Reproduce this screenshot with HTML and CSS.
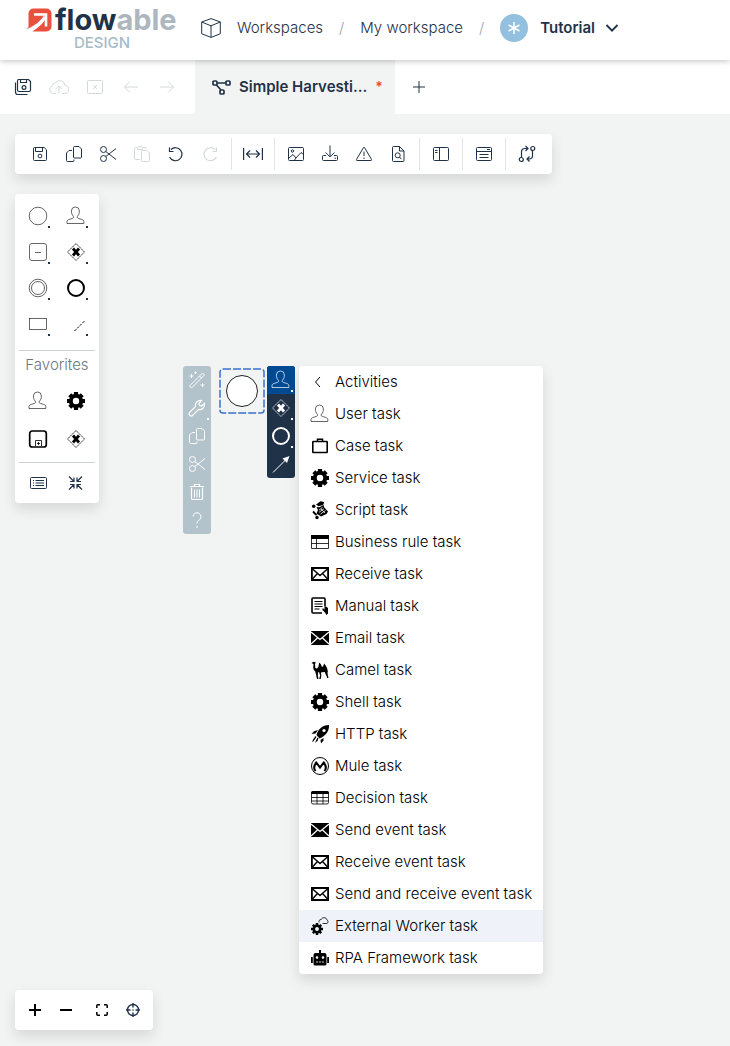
FILE: index.html
```html
<!DOCTYPE html>
<html lang="en">
<head>
<meta charset="utf-8">
<meta name="viewport" content="width=device-width, initial-scale=1">
<title>Flowable Design</title>
<link rel="stylesheet" href="styles.css">
</head>
<body>
<svg class="sprite" aria-hidden="true">
  <symbol id="cube" viewBox="0 0 20 20"><path d="M10 .6 19.3 4v11.8L10 19.4.7 15.8V4zM.7 4 10 7.8 19.3 4M10 7.8v11.6"/></symbol>
  <symbol id="chevron" viewBox="0 0 14 10"><path d="M1.5 2 7 7.6 12.5 2" stroke-width="1.8"/></symbol>
  <symbol id="save" viewBox="0 0 20 20"><path d="M4.5 3.5h9.7l2.3 2.3v9.7a1 1 0 0 1-1 1h-11a1 1 0 0 1-1-1v-11a1 1 0 0 1 1-1zM5.5 3.5v4h7v-4"/><circle cx="10" cy="12" r="1.9"/></symbol>
  <symbol id="saveall" viewBox="0 0 20 20"><path d="M5.500 2.500h10l2 2v8.500a1.500 1.500 0 0 1-1.500 1.500h-10a1.500 1.500 0 0 1-1.500-1.500v-9a1.500 1.500 0 0 1 1-1.500zM7.500 2.500v3h6v-3M2.500 5.500v9.500a2.500 2.500 0 0 0 2.500 2.500h9.500" stroke-width="1.200"/><circle cx="11" cy="10.500" r="1.900" stroke-width="1.200"/></symbol>
  <symbol id="cloud" viewBox="0 0 20 20"><path d="M7 16.500H4.500a4 4 0 0 1-1-7.800 3.300 3.300 0 0 1 3.300-3.200A5.200 5.200 0 0 1 16 8.500a4 4 0 0 1-.5 8H13M10 16.500V9M7 11.800 10 8.800l3 3"/></symbol>
  <symbol id="closebox" viewBox="0 0 20 20"><rect x="2.500" y="3.500" width="15" height="13" rx="1"/><path d="m8 7.900 4.200 4.200m0-4.200L8 12.100"/></symbol>
  <symbol id="left" viewBox="0 0 20 20"><path d="M17 10H3.500M9 4.500 3.500 10 9 15.500"/></symbol>
  <symbol id="right" viewBox="0 0 20 20"><path d="M3 10h13.500M11 4.500l5.500 5.500-5.500 5.500"/></symbol>
  <symbol id="flow" viewBox="0 0 20 16"><g stroke-width="1.700"><rect x="2" y="2" width="4" height="4" rx="1"/><rect x="15" y="2" width="4" height="4" rx="1"/><rect x="9" y="11" width="4" height="4" rx="1"/><path d="M6 4h9M5.500 6l4.500 5"/></g></symbol>
  <symbol id="copy" viewBox="0 0 20 20"><path d="M10.500 2.500h4.500l2.500 2.500v8a1 1 0 0 1-1 1h-6a1 1 0 0 1-1-1V3.500a1 1 0 0 1 1-1zM8 6.500H5l-2.500 2.500v7.500a1 1 0 0 0 1 1h5.500a1 1 0 0 0 1-1v-1"/></symbol>
  <symbol id="cut" viewBox="0 0 20 20"><circle cx="5.500" cy="5.500" r="3"/><circle cx="5.500" cy="14.500" r="3"/><path d="m7.800 7.500 10.200 8M7.800 12.500 18 4.500"/></symbol>
  <symbol id="paste" viewBox="0 0 20 20"><path d="M8 15.500H3.500a1 1 0 0 1-1-1v-10a1 1 0 0 1 1-1H5m6 0h2.500a1 1 0 0 1 1 1M5.500 5.500v-2l1.500-1h2l1.500 1v2zM10.500 6.500h4.500l2.500 2.500v7.500a1 1 0 0 1-1 1h-6a1 1 0 0 1-1-1v-9a1 1 0 0 1 1-1z"/></symbol>
  <symbol id="undo" viewBox="0 0 20 20"><path d="M5 5.500a6.500 6.500 0 1 1-1.400 7.500M3.500 3.500v4H7.500" stroke-width="1.200"/></symbol>
  <symbol id="redo" viewBox="0 0 20 20"><path d="M15 5.500a6.500 6.500 0 1 0 1.400 7.500M16.500 3.500v4h-4" stroke-width="1.200"/></symbol>
  <symbol id="width" viewBox="0 0 20 20"><path d="M.6 4v12M19.400 4v12M4 10h12M7 6.500 3.500 10 7 13.500M13 6.500l3.500 3.500-3.500 3.500" stroke-width="1.200"/></symbol>
  <symbol id="image" viewBox="0 0 20 20"><rect x="2.500" y="3.500" width="15" height="13" rx="1"/><circle cx="6.500" cy="7" r="1.200"/><path d="m3 14 4-3.500 3 3.500 5-5.500 2.500 2M10 14l-1.500 2"/></symbol>
  <symbol id="import" viewBox="0 0 20 20"><path d="M6 11.500H3.500a1 1 0 0 0-1 1v3a1 1 0 0 0 1 1h13a1 1 0 0 0 1-1v-3a1 1 0 0 0-1-1H14M10 1.500v11M5.500 8.500l4.500 4.300 4.500-4.300M14.500 14.200h1.500"/></symbol>
  <symbol id="warn" viewBox="0 0 20 20"><path d="M9.400 3.700 2.500 15.500a.7.7 0 0 0 .6 1h13.800a.7.700 0 0 0 .6-1L10.600 3.700a.7.7 0 0 0-1.200 0zM10 7.500v4.500M10 13.500v1.500"/></symbol>
  <symbol id="search" viewBox="0 0 20 20"><path d="M5.500 2.500h6l4.500 4.500v9.500a1 1 0 0 1-1 1H5.500a1 1 0 0 1-1-1v-13a1 1 0 0 1 1-1zM11.500 2.500V7H16M11.500 13l2 2.200"/><circle cx="9.700" cy="11.300" r="2.500"/></symbol>
  <symbol id="panel" viewBox="0 0 20 20"><rect x="2.500" y="3.500" width="15" height="13" rx="1"/><path d="M8.500 3.500v13M4 6.500h2.500M4 8.500h2.500"/></symbol>
  <symbol id="form" viewBox="0 0 20 20"><rect x="2.500" y="3.500" width="15" height="13" rx="1"/><path d="M2.500 7.500h15M13 5.500h3M5.500 10.500h9M5.500 13.500h9"/></symbol>
  <symbol id="swap" viewBox="0 0 20 20"><g stroke-width="1.200"><circle cx="15.800" cy="4.500" r="2"/><circle cx="4.300" cy="15.500" r="2"/><path d="M4.500 13.500V8a3.500 3.500 0 0 1 3.500-3.500h3M8.500 2l2.500 2.500L8.500 7M15.500 6.500V12a3 3 0 0 1-3 3H10M12.500 12.500 10 15l2.500 2.500"/></g></symbol>
  <symbol id="circle" viewBox="0 0 20 20"><circle cx="10" cy="10" r="8.800"/></symbol>
  <symbol id="circles" viewBox="0 0 20 20"><circle cx="10" cy="10" r="8.800"/><circle cx="10" cy="10" r="6.500"/></symbol>
  <symbol id="ring" viewBox="0 0 20 20"><circle cx="10" cy="10" r="8" stroke-width="2"/></symbol>
  <symbol id="user" viewBox="0 0 20 20"><path d="M1 17.500V15.500c0-1 .8-1.700 2.200-2.100l3-.9c1.700-.5 1.700-1.500.9-2.500C5.900 8.600 5.400 6.900 5.400 5a4 4 0 0 1 8 0c0 1.900-.5 3.600-1.700 5-.8 1-.8 2 .9 2.500l3 .9c1.400.4 2.200 1.100 2.200 2.100v2z"/></symbol>
  <symbol id="minusbox" viewBox="0 0 20 20"><rect x="1.500" y="1.500" width="17" height="17" rx="2.500"/><path d="M7 10.500h6"/></symbol>
  <symbol id="gateway" viewBox="0 0 20 20"><path d="m10 1.500 8.500 8.500-8.500 8.500L1.500 10z" stroke-dasharray="2 .5" stroke-width=".8"/><path d="m7 6.500 6 7m0-7-6 7" stroke-width="2.800"/></symbol>
  <symbol id="rect" viewBox="0 0 20 20"><rect x="1.500" y="4.500" width="17" height="11"/></symbol>
  <symbol id="dashline" viewBox="0 0 20 20"><path d="M8.500 17 19 6.500" stroke-dasharray="2.500 1.300"/></symbol>
  <symbol id="gear" viewBox="0 0 20 20"><circle cx="10" cy="10" r="5.200" stroke-width="4"/><path stroke-width="4.200" d="M10 1v3M10 16v3M1 10h3M16 10h3M3.800 3.800l2 2M14.200 14.200l2 2M16.200 3.800l-2 2M5.800 14.200l-2 2"/></symbol>
  <symbol id="subprocess" viewBox="0 0 20 20"><rect x="1.700" y="2" width="16.600" height="16" rx="2.500" stroke-width="1.700"/><path d="M7.500 17v-5.500h6V17M9 14.500h3M10.500 13v3" stroke-width=".8"/></symbol>
  <symbol id="list" viewBox="0 0 20 20"><rect x="2.500" y="4.500" width="16" height="11" rx="1"/><path d="M5 7.500h1M5 10h1M5 12.500h1M7.500 7.500h8.500M7.500 10h8.500M7.500 12.500h8.500"/></symbol>
  <symbol id="collapse" viewBox="0 0 20 20"><path stroke-width="1.200" d="m3 3.500 5 5m0-4v4H4M16 3.500l-5 5m0-4v4h4M3 16.500l5-5m0 4v-4H4M16 16.500l-5-5m0 4v-4h4"/></symbol>
  <symbol id="wand" viewBox="0 0 20 20"><path d="M2.500 16 15.500 3l2 2-13 13zM12.500 6l2 2M4.500 4v4M2.500 6h4M8.500 1.500v2.500M7.300 2.700h2.500M15.500 13v4M13.500 15h4"/></symbol>
  <symbol id="wrench" viewBox="0 0 20 20"><path stroke-width="1.200" d="M2.700 17.300a2 2 0 0 1 0-3L8.500 8.500c-.7-3.600 2-6.500 6-6L12 5.500l.5 2 2 .5 3-2.500c.5 4-2.400 6.700-6 6l-5.800 5.800a2 2 0 0 1-3 0z"/></symbol>
  <symbol id="trash" viewBox="0 0 20 20"><path d="M4.500 5.500v11a1 1 0 0 0 1 1h9a1 1 0 0 0 1-1v-11M3 4.500h14M7.500 4.500v-2h5v2" stroke-width="1.200"/><path d="M7.500 7.500v8M10 7.500v8M12.500 7.500v8"/></symbol>
  <symbol id="help" viewBox="0 0 20 20"><path d="M6 6.500a4 4 0 1 1 6.200 3.600c-1.600 1-2.200 1.700-2.200 3.400M10 16v2"/></symbol>
  <symbol id="arrow" viewBox="0 0 20 20"><path d="M2 18.500 15 5.500"/><path class="solid" d="m18.500 2-2.500 7-4.500-4.500z"/></symbol>
  <symbol id="back" viewBox="0 0 20 20"><path d="m10 5-4.500 5 4.500 5"/></symbol>
  <symbol id="case" viewBox="0 0 20 20"><rect x="2.800" y="5.500" width="14.400" height="11" rx=".5" stroke-width="1.600"/><path d="M7.500 5.500V3.200h5v2.300" stroke-width="1.500"/></symbol>
  <symbol id="script" viewBox="0 0 20 20"><g class="solid"><path d="m6 4.500 4.500-3.300 3.700.8-1 3-4.700 1.200z"/><circle cx="3.700" cy="6.300" r="1.700"/><path d="m6.500 7 3 .3 4-2.300.8 2.500L18 11.500l-1.500 2.500-5.500 2.500-4.500-3L8 10z"/><path d="m3.500 10.500 4 4.500-2 .5-3-3z"/><circle cx="7" cy="17.500" r="1.700"/></g><path class="light" stroke-width=".8" d="m9 10 3.500-2.500M9 12.300l5-3.500M10.500 14l5-3.500M11 9l4 4"/></symbol>
  <symbol id="rule" viewBox="0 0 20 20"><path class="solid" d="M1 3h18v4H1z"/><path d="M1.500 6.500v10h17v-10M1.500 11.500h17M6.500 6.500v10" stroke-width=".8"/></symbol>
  <symbol id="mail" viewBox="0 0 20 20"><path d="M1.900 4h16.200v12H1.900z" stroke-width="1.800"/><path d="m2 4.500 8 7 8-7M2 15.500l5.500-6M18 15.500l-5.500-6" stroke-width="1.400"/></symbol>
  <symbol id="mailfill" viewBox="0 0 20 20"><path class="solid" d="M1 3h18v14H1z"/><path class="light" d="m1 4 9 7.500L19 4M1 16l6.500-6M19 16l-6.500-6" stroke-width="1.200"/></symbol>
  <symbol id="manual" viewBox="0 0 20 20"><path d="M12 17H3a1 1 0 0 1-1-1V3a1 1 0 0 1 1-1h11a1 1 0 0 1 1 1v7" stroke-width="1.600"/><path d="M4.500 5.500h8M4.500 8h8M4.500 10.500h8M4.500 13h5"/><path class="solid" d="m12.500 12 2 1.500V10l1.500.5 2 1.500v5.500l-1.500 1.500-1.500-2.500-2.500-2.500z"/></symbol>
  <symbol id="camel" viewBox="0 0 20 20"><path class="solid" d="m1.500 3 2-1.200 2.300.7-.8 1.500.3 4L7 8.500 8.300 7l1-4.500L11 4.500 12 7l1-.5 1.200-3L16 6l1.200 2.500.8 4-.6-.5.4 3 .7 3H16.800l.2-1-1.500-3-.7-2-2.800.3-1 .2.3 3.500L10.700 19H9.200l.9-3.500-.9-3-1.200-.5-.2 3 .7 4H7l-.9-4-.8-3.500-1.500-1.500-.6-2.500.3-3.500z"/></symbol>
  <symbol id="rocket" viewBox="0 0 20 20"><path class="solid" d="M19 1c.3 5-2 9-6.500 12L9.500 14.500 6.500 11C8 5.500 12 1 19 1zM8 6 5.500 9.500l-4 .5L4 7.300zM13.500 14v2.500L11 19.500l-.5-3.500zM5.500 12l1 1-3.200 4.500-1 .5.500-2zM7.500 13.500l1 1-1 2.500-2.500 1.800z"/><circle class="hole" cx="14" cy="6.500" r="1.600"/></symbol>
  <symbol id="mule" viewBox="0 0 20 20"><circle cx="10" cy="10" r="8.500"/><path d="M5.500 15c-2.300-3-1.300-6 .8-8.500L10 11.500l3.700-5c2.100 2.500 3.100 5.500.8 8.500" stroke-width="2"/></symbol>
  <symbol id="table" viewBox="0 0 20 20"><path class="solid" d="M1 6V5a2 2 0 0 1 2-2h14a2 2 0 0 1 2 2v1z"/><rect x="1.500" y="3.500" width="17" height="12.500" rx="1.500" stroke-width=".8"/><path d="M1.500 9.500h17M1.500 13h17M7 6v10M13 6v10" stroke-width=".8"/></symbol>
  <symbol id="worker" viewBox="0 0 20 20"><circle cx="7" cy="13" r="3.200" stroke-width="2.500"/><path d="M7 7v2M7 17v2M1 13h2M11 13h2M2.800 8.800l1.500 1.500M9.700 15.700l1.500 1.500M11.200 8.800l-1.500 1.500M4.300 15.700l-1.500 1.500" stroke-width="2.500"/><path d="M12.500 7.500h4.500a2 2 0 0 0 0-3.500c-.5-3-5-3-5.800-.5-2 0-2.700 1.500-2 3" stroke-width=".8"/></symbol>
  <symbol id="robot" viewBox="0 0 20 20"><path class="solid" d="M9 2h2v3h3.500a2 2 0 0 1 2 2v9a1.500 1.500 0 0 1-1.500 1.500H5A1.500 1.500 0 0 1 3.500 16V7a2 2 0 0 1 2-2H9zM1 9h1.800v6H1zM17.200 9H19v6h-1.800z"/><circle class="hole" cx="7" cy="9.500" r="1.300"/><circle class="hole" cx="13" cy="9.500" r="1.300"/><path class="light" d="M6 14h2M9 14h2M12 14h2" stroke-width=".8"/></symbol>
  <symbol id="plus" viewBox="0 0 20 20"><path d="M10 4v12M4 10h12"/></symbol>
  <symbol id="minus" viewBox="0 0 20 20"><path d="M4 10h12"/></symbol>
  <symbol id="fit" viewBox="0 0 20 20"><path d="M4.800 8V5.800a1 1 0 0 1 1-1H8M12 4.800h2.200a1 1 0 0 1 1 1V8M15.200 12v2.200a1 1 0 0 1-1 1H12M8 15.200H5.800a1 1 0 0 1-1-1V12" stroke-width="1.500"/></symbol>
  <symbol id="target" viewBox="0 0 20 20"><circle cx="10" cy="10" r="5.500" stroke-width="1.400"/><path d="M10 3v4.500M10 12.500V17M3 10h4.500M12.500 10H17" stroke-width="1.400"/><circle class="solid" cx="10" cy="10" r=".8"/></symbol>
</svg>

<header class="header">
  <a class="brand" href="#" aria-label="Flowable Design">
    <span class="brand-row">
      <svg class="brand-mark" viewBox="0 0 26 26"><rect x="1.500" y="1.500" width="23" height="23" rx="5" fill="#e9503e"/><path d="M7 7.500h12v12" fill="none" stroke="#fff" stroke-width="2.600"/><path d="M0 26v-4C8 18 13 14.500 16.500 8.500l2.500 2.500C15 18.500 9 22 3 26z" fill="#fff"/><path d="M0 21.500C8 18 13 14 16 9.500" fill="none" stroke="#e9503e" stroke-width=".8"/></svg>
      <span class="brand-name">flow<span class="brand-tail">able</span></span>
    </span>
    <span class="brand-sub">DESIGN</span>
  </a>
  <nav class="crumbs" aria-label="Breadcrumb">
    <svg class="icon cube"><use href="#cube"/></svg>
    <a href="#">Workspaces</a><span class="slash">/</span>
    <a href="#">My workspace</a><span class="slash">/</span>
    <button class="app" type="button"><span class="avatar"><svg viewBox="0 0 14 14"><path d="M7 1v12M1.500 4l11 6M12.500 4l-11 6"/></svg></span>Tutorial<svg class="chevron"><use href="#chevron"/></svg></button>
  </nav>
</header>

<div class="tabs">
  <div class="tab-actions">
    <button type="button" aria-label="Save all"><svg class="icon"><use href="#saveall"/></svg></button>
    <button type="button" aria-label="Publish" disabled><svg class="icon"><use href="#cloud"/></svg></button>
    <button type="button" aria-label="Close all" disabled><svg class="icon"><use href="#closebox"/></svg></button>
    <button type="button" aria-label="Back" disabled><svg class="icon"><use href="#left"/></svg></button>
    <button type="button" aria-label="Forward" disabled><svg class="icon"><use href="#right"/></svg></button>
  </div>
  <button class="tab" type="button"><svg class="tab-icon"><use href="#flow"/></svg><span class="tab-name">Simple Harvesti...</span><span class="star">*</span></button>
  <div class="tab-rest"><button type="button" aria-label="New tab"><svg class="icon"><use href="#plus"/></svg></button></div>
</div>

<main class="canvas">
  <div class="toolbar card" role="toolbar" aria-label="Editor">
    <button type="button" aria-label="Save"><svg class="icon"><use href="#save"/></svg></button>
    <button type="button" aria-label="Copy"><svg class="icon"><use href="#copy"/></svg></button>
    <button type="button" aria-label="Cut"><svg class="icon"><use href="#cut"/></svg></button>
    <button type="button" aria-label="Paste" disabled><svg class="icon"><use href="#paste"/></svg></button>
    <button type="button" aria-label="Undo"><svg class="icon"><use href="#undo"/></svg></button>
    <button type="button" aria-label="Redo" disabled><svg class="icon"><use href="#redo"/></svg></button>
    <i class="divider"></i>
    <button type="button" aria-label="Same width"><svg class="icon"><use href="#width"/></svg></button>
    <i class="divider"></i>
    <button type="button" aria-label="Image"><svg class="icon"><use href="#image"/></svg></button>
    <button type="button" aria-label="Download"><svg class="icon"><use href="#import"/></svg></button>
    <button type="button" aria-label="Validate"><svg class="icon"><use href="#warn"/></svg></button>
    <button type="button" aria-label="Search"><svg class="icon"><use href="#search"/></svg></button>
    <i class="divider"></i>
    <button type="button" aria-label="Panel"><svg class="icon"><use href="#panel"/></svg></button>
    <i class="divider"></i>
    <button type="button" aria-label="Form"><svg class="icon"><use href="#form"/></svg></button>
    <i class="divider"></i>
    <button type="button" aria-label="Compare"><svg class="icon"><use href="#swap"/></svg></button>
  </div>

  <aside class="palette card" aria-label="Palette">
    <div class="palette-grid">
      <button class="more" type="button" aria-label="Start event"><svg class="icon thin"><use href="#circle"/></svg></button>
      <button class="more" type="button" aria-label="Activity"><svg class="icon thin"><use href="#user"/></svg></button>
      <button class="more" type="button" aria-label="Structure"><svg class="icon thin"><use href="#minusbox"/></svg></button>
      <button class="more" type="button" aria-label="Gateway"><svg class="icon black"><use href="#gateway"/></svg></button>
      <button class="more" type="button" aria-label="Intermediate event"><svg class="icon thin"><use href="#circles"/></svg></button>
      <button class="more" type="button" aria-label="End event"><svg class="icon black"><use href="#ring"/></svg></button>
      <button class="more" type="button" aria-label="Swimlane"><svg class="icon thin"><use href="#rect"/></svg></button>
      <button class="more" type="button" aria-label="Artifact"><svg class="icon black"><use href="#dashline"/></svg></button>
    </div>
    <h2 class="palette-title">Favorites</h2>
    <div class="palette-grid favorites">
      <button type="button" aria-label="User task"><svg class="icon thin"><use href="#user"/></svg></button>
      <button type="button" aria-label="Service task"><svg class="icon black"><use href="#gear"/></svg></button>
      <button type="button" aria-label="Subprocess"><svg class="icon black"><use href="#subprocess"/></svg></button>
      <button type="button" aria-label="Exclusive gateway"><svg class="icon black"><use href="#gateway"/></svg></button>
    </div>
    <div class="palette-grid palette-foot">
      <button type="button" aria-label="List view"><svg class="icon"><use href="#list"/></svg></button>
      <button type="button" aria-label="Collapse"><svg class="icon"><use href="#collapse"/></svg></button>
    </div>
  </aside>

  <div class="rail rail-edit">
    <button type="button" aria-label="Magic"><svg class="icon"><use href="#wand"/></svg></button>
    <button class="more" type="button" aria-label="Change type"><svg class="icon"><use href="#wrench"/></svg></button>
    <button type="button" aria-label="Duplicate"><svg class="icon"><use href="#copy"/></svg></button>
    <button type="button" aria-label="Cut"><svg class="icon"><use href="#cut"/></svg></button>
    <button type="button" aria-label="Delete"><svg class="icon"><use href="#trash"/></svg></button>
    <button type="button" aria-label="Help"><svg class="icon"><use href="#help"/></svg></button>
  </div>
  <svg class="node" viewBox="0 0 46 46" role="img" aria-label="Start event"><rect x="1" y="1" width="44" height="44" rx="3" fill="none" stroke="#3a70cc" stroke-width="1.500" stroke-dasharray="8 2"/><circle cx="23" cy="23" r="15.500" fill="#fff" stroke="#222"/></svg>
  <div class="rail rail-add">
    <button class="more active" type="button" aria-label="Activities"><svg class="icon"><use href="#user"/></svg></button>
    <button class="more" type="button" aria-label="Gateways"><svg class="icon"><use href="#gateway"/></svg></button>
    <button class="more" type="button" aria-label="Events"><svg class="icon"><use href="#ring"/></svg></button>
    <button type="button" aria-label="Connect"><svg class="icon"><use href="#arrow"/></svg></button>
  </div>
  <div class="menu card">
    <button type="button"><svg class="icon"><use href="#back"/></svg>Activities</button>
    <button type="button"><svg class="icon thin"><use href="#user"/></svg>User task</button>
    <button type="button"><svg class="icon"><use href="#case"/></svg>Case task</button>
    <button type="button"><svg class="icon"><use href="#gear"/></svg>Service task</button>
    <button type="button"><svg class="icon"><use href="#script"/></svg>Script task</button>
    <button type="button"><svg class="icon"><use href="#rule"/></svg>Business rule task</button>
    <button type="button"><svg class="icon"><use href="#mail"/></svg>Receive task</button>
    <button type="button"><svg class="icon"><use href="#manual"/></svg>Manual task</button>
    <button type="button"><svg class="icon"><use href="#mailfill"/></svg>Email task</button>
    <button type="button"><svg class="icon"><use href="#camel"/></svg>Camel task</button>
    <button type="button"><svg class="icon"><use href="#gear"/></svg>Shell task</button>
    <button type="button"><svg class="icon"><use href="#rocket"/></svg>HTTP task</button>
    <button type="button"><svg class="icon"><use href="#mule"/></svg>Mule task</button>
    <button type="button"><svg class="icon"><use href="#table"/></svg>Decision task</button>
    <button type="button"><svg class="icon"><use href="#mailfill"/></svg>Send event task</button>
    <button type="button"><svg class="icon"><use href="#mail"/></svg>Receive event task</button>
    <button type="button"><svg class="icon"><use href="#mail"/></svg>Send and receive event task</button>
    <button class="current" type="button"><svg class="icon"><use href="#worker"/></svg>External Worker task</button>
    <button type="button"><svg class="icon"><use href="#robot"/></svg>RPA Framework task</button>
  </div>

  <div class="zoombar card" role="toolbar" aria-label="Zoom">
    <button type="button" aria-label="Zoom in"><svg class="icon heavy"><use href="#plus"/></svg></button>
    <button type="button" aria-label="Zoom out"><svg class="icon heavy"><use href="#minus"/></svg></button>
    <button type="button" aria-label="Fit"><svg class="icon black"><use href="#fit"/></svg></button>
    <button type="button" aria-label="Center"><svg class="icon"><use href="#target"/></svg></button>
  </div>
</main>
</body>
</html>
```
FILE: styles.css
```css
* { box-sizing: border-box; }
body {
  margin: 0;
  min-height: 100vh;
  display: flex;
  flex-direction: column;
  background: #f2f4f4;
  color: #1f3247;
  font: 300 15px/20px Inter, "Open Sans", sans-serif;
}
button {
  margin: 0;
  padding: 0;
  border: 0;
  background: none;
  color: inherit;
  font: inherit;
  display: flex;
  align-items: center;
  justify-content: center;
}
button:disabled { color: #d5d8da; }
a { color: inherit; text-decoration: none; }
svg { fill: none; stroke: currentColor; flex: none; }
.sprite { position: absolute; width: 0; height: 0; }
.icon { width: 20px; height: 20px; }
.solid { fill: currentColor; stroke: none; }
.light { stroke: #fff; }
.hole { fill: #fff; stroke: none; }
.thin { color: #000; stroke-width: .6px; }
.black { color: #000; }
.heavy { color: #000; stroke-width: 2px; }
.card {
  background: #fff;
  border-radius: 4px;
  box-shadow: 0 6px 14px rgba(0, 0, 0, .12);
}

.header {
  position: relative;
  display: flex;
  align-items: center;
  height: 60px;
  padding-left: 27px;
  background: #fff;
  box-shadow: 0 1px 6px rgba(0, 0, 0, .25);
}
.brand { display: flex; flex-direction: column; width: 150px; height: 50px; }
.brand-row { display: flex; align-items: center; gap: 2px; height: 30px; }
.brand-mark { width: 26px; height: 26px; stroke: none; }
.brand-name { font-size: 29px; line-height: 30px; font-weight: 700; }
.brand-tail { color: #adb7c0; }
.brand-sub { color: #a5bcc8; font-size: 15px; line-height: 16px; font-weight: 500; text-align: center; }
.crumbs { display: flex; align-items: center; margin: 0 0 4px 24px; white-space: nowrap; }
.cube { margin-right: 16px; }
.slash { margin: 0 16px; color: #9aa5b0; }
.app { font-weight: 600; }
.avatar {
  display: flex;
  align-items: center;
  justify-content: center;
  width: 28px;
  height: 28px;
  margin-right: 12px;
  border-radius: 50%;
  background: #93c0de;
  color: #fff;
}
.avatar svg { width: 14px; height: 14px; stroke-width: 1.5px; }
.chevron { width: 14px; height: 10px; margin-left: 10px; }

.tabs { display: flex; height: 54px; }
.tab-actions {
  display: flex;
  align-items: center;
  width: 195px;
  padding-left: 5px;
  background: #fff;
  border-bottom-right-radius: 4px;
}
.tab-actions button { width: 36px; height: 36px; }
.tab { width: 200px; padding: 0 16px; justify-content: flex-start; font-weight: 600; }
.tab-icon { width: 20px; height: 16px; margin-right: 8px; }
.tab-name { white-space: nowrap; }
.star { margin-left: 8px; color: #f0483e; font-size: 14px; }
.tab-rest { flex: 1; display: flex; align-items: center; padding-left: 14px; background: #fff; }

.canvas { position: relative; flex: 1; padding: 20px 15px; min-height: 932px; }
.toolbar { display: flex; align-items: center; width: max-content; padding: 3px 8px; }
.toolbar button { width: 34px; height: 34px; }
.divider { width: 1px; height: 32px; margin: 0 4px; background: #e2e5e7; }

.palette { width: 84px; margin-top: 20px; padding: 4px 4px 0; }
.palette-grid { display: grid; grid-template-columns: 1fr 1fr; grid-auto-rows: 36px; }
.palette-title {
  margin: 8px 0 0;
  padding: 4px 0;
  border-top: 1px solid #cdd1da;
  color: #6c7682;
  font-size: 15px;
  line-height: 20px;
  font-weight: 300;
  text-align: center;
}
.favorites { grid-auto-rows: 38px; padding: 3px 0 4px; }
.palette-foot { grid-auto-rows: 40px; border-top: 1px solid #cdd1da; }
.more { position: relative; }
.more::after {
  content: "";
  position: absolute;
  right: 7px;
  bottom: 6px;
  width: 2px;
  height: 2px;
  background: currentColor;
}

.rail { position: absolute; top: 252px; width: 28px; border-radius: 3px; overflow: hidden; color: #fff; }
.rail button { width: 28px; height: 28px; }
.rail .more::after { right: 2px; bottom: 2px; }
.rail-edit { left: 183px; background: #b3c3cb; }
.rail-add { left: 267px; background: #1f3247; }
.active { background: #004a94; }
.active .icon { stroke-width: .7px; }
.node { position: absolute; left: 219px; top: 254px; width: 46px; height: 46px; }
.menu { position: absolute; left: 299px; top: 252px; min-width: 244px; overflow: hidden; color: #000; }
.menu button { width: 100%; height: 32px; padding: 0 11px; gap: 5px; justify-content: flex-start; white-space: nowrap; }
.menu .current { background: #eff3f9; }
.zoombar { position: absolute; left: 15px; bottom: 16px; display: flex; padding: 4px 5px 4px 4px; }
.zoombar button { width: 31px; height: 32px; }
.zoombar button:nth-child(3) { margin-left: 5px; }
```
